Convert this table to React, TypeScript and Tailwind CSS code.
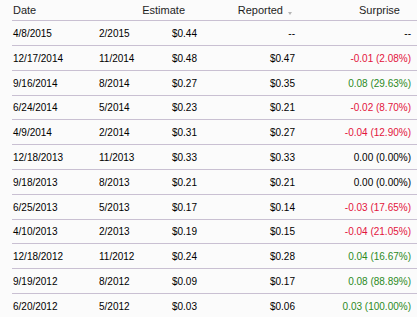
import React from "react";

type Row = { date: string; period: string; est: string; rep: string; sur: string; tone: "red" | "green" | "none"; h: string };

const rows: Row[] = [
  { date: "4/8/2015", period: "2/2015", est: "$0.44", rep: "--", sur: "--", tone: "none", h: "h-[25px]" },
  { date: "12/17/2014", period: "11/2014", est: "$0.48", rep: "$0.47", sur: "-0.01 (2.08%)", tone: "red", h: "h-[25px]" },
  { date: "9/16/2014", period: "8/2014", est: "$0.27", rep: "$0.35", sur: "0.08 (29.63%)", tone: "green", h: "h-[25px]" },
  { date: "6/24/2014", period: "5/2014", est: "$0.23", rep: "$0.21", sur: "-0.02 (8.70%)", tone: "red", h: "h-[24px]" },
  { date: "4/9/2014", period: "2/2014", est: "$0.31", rep: "$0.27", sur: "-0.04 (12.90%)", tone: "red", h: "h-[25px]" },
  { date: "12/18/2013", period: "11/2013", est: "$0.33", rep: "$0.33", sur: "0.00 (0.00%)", tone: "none", h: "h-[25px]" },
  { date: "9/18/2013", period: "8/2013", est: "$0.21", rep: "$0.21", sur: "0.00 (0.00%)", tone: "none", h: "h-[25px]" },
  { date: "6/25/2013", period: "5/2013", est: "$0.17", rep: "$0.14", sur: "-0.03 (17.65%)", tone: "red", h: "h-[25px]" },
  { date: "4/10/2013", period: "2/2013", est: "$0.19", rep: "$0.15", sur: "-0.04 (21.05%)", tone: "red", h: "h-[24px]" },
  { date: "12/18/2012", period: "11/2012", est: "$0.24", rep: "$0.28", sur: "0.04 (16.67%)", tone: "green", h: "h-[25px]" },
  { date: "9/19/2012", period: "8/2012", est: "$0.09", rep: "$0.17", sur: "0.08 (88.89%)", tone: "green", h: "h-[25px]" },
  { date: "6/20/2012", period: "5/2012", est: "$0.03", rep: "$0.06", sur: "0.03 (100.00%)", tone: "green", h: "h-[25px]" },
];

const toneClass = (t: Row["tone"]) =>
  t === "red" ? "text-[#e3143c]" : t === "green" ? "text-[#2b8a1e]" : "text-[#000]";

export default function App() {
  return (
    <div
      className="w-[417px] h-[317px] overflow-hidden bg-[#fbfbfb]"
      style={{ fontFamily: '"Liberation Sans", Arial, sans-serif' }}
    >
      <div className="ml-[12px] flex flex-col">
        <div className="h-[21px] flex items-center border-b border-[#c9c0d2] text-[11px] text-[#1e1e1e]">
          <div className="w-[87px] pl-[1px]">Date</div>
          <div className="w-[50px]"></div>
          <div className="w-[48px] flex justify-end pr-[12px] whitespace-nowrap">Estimate</div>
          <div className="w-[98px] flex justify-end items-center pr-[12px] relative">
            <span>Reported</span>
            <svg className="absolute right-[3px] top-[10px]" width="4" height="3" viewBox="0 0 4 3">
              <path d="M0 0 L4 0 L2 3 Z" fill="#b5b5b5" />
            </svg>
          </div>
          <div className="w-[116px] text-right pr-[11px]">Surprise</div>
        </div>
        {rows.map((r) => (
          <div
            key={r.date}
            className={`${r.h} flex items-center border-b border-[#c9c0d2] text-[10px] text-[#000]`}
          >
            <div className="w-[87px] pl-[1px]">{r.date}</div>
            <div className="w-[50px]">{r.period}</div>
            <div className="w-[48px] text-right">{r.est}</div>
            <div className="w-[98px] text-right">{r.rep}</div>
            <div className={`w-[116px] text-right ${toneClass(r.tone)}`}>{r.sur}</div>
          </div>
        ))}
      </div>
    </div>
  );
}
